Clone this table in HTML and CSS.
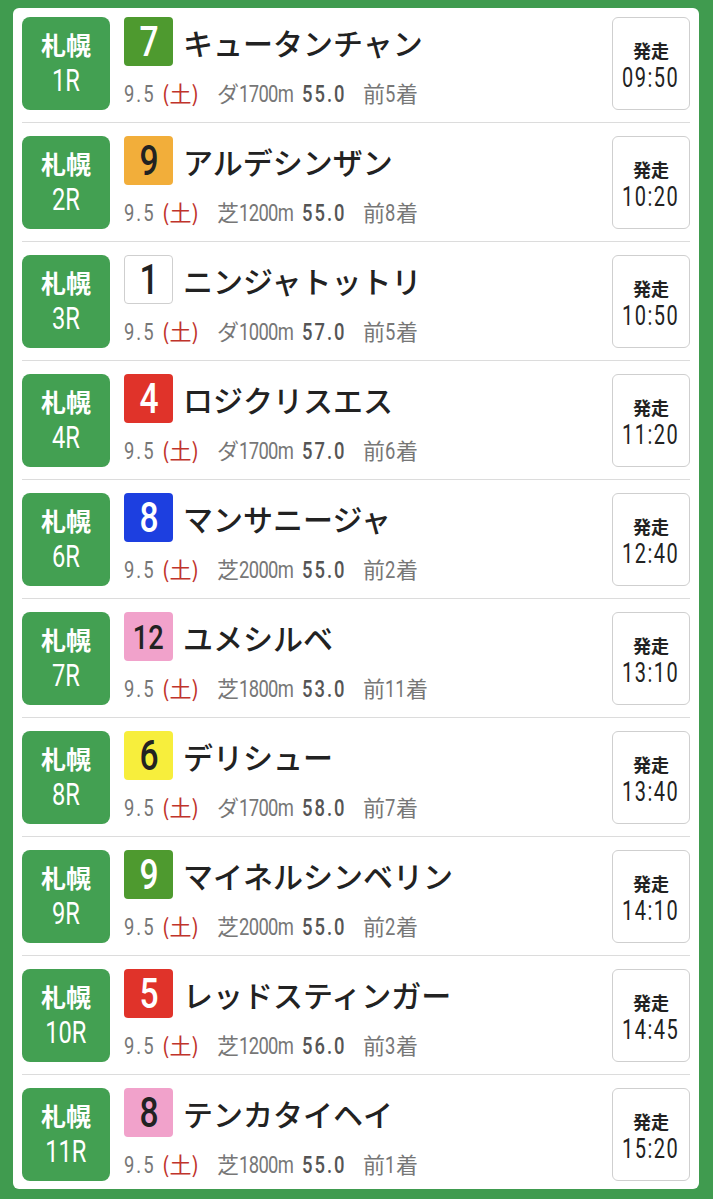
FILE: index.html
```html
<!DOCTYPE html>
<html lang="ja">
<head>
<meta charset="utf-8">
<title>札幌</title>
<link rel="stylesheet" href="styles.css">
</head>
<body>
<div class="card">
  <div class="row">
    <div class="venue"><span class="v-name">札幌</span><span class="v-race">1R</span></div>
    <div class="info">
      <div class="top"><span class="num c-green"><span class="sq">7</span></span><span class="horse">キュータンチャン</span></div>
      <div class="meta"><span class="nb w-date"><span class="sq">9.5</span></span><span class="dow">(土)</span><span class="surf">ダ</span><span class="nb w-dist"><span class="sq">1700m</span></span><span class="nb w-kg kg"><span class="sq">55.0</span></span><span class="prev">前</span><span class="nb w-d1"><span class="sq">5</span></span><span class="prev">着</span></div>
    </div>
    <div class="start"><span class="s-label">発走</span><span class="s-time">09:50</span></div>
  </div>
  <div class="row">
    <div class="venue"><span class="v-name">札幌</span><span class="v-race">2R</span></div>
    <div class="info">
      <div class="top"><span class="num c-orange"><span class="sq">9</span></span><span class="horse">アルデシンザン</span></div>
      <div class="meta"><span class="nb w-date"><span class="sq">9.5</span></span><span class="dow">(土)</span><span class="surf">芝</span><span class="nb w-dist"><span class="sq">1200m</span></span><span class="nb w-kg kg"><span class="sq">55.0</span></span><span class="prev">前</span><span class="nb w-d1"><span class="sq">8</span></span><span class="prev">着</span></div>
    </div>
    <div class="start"><span class="s-label">発走</span><span class="s-time">10:20</span></div>
  </div>
  <div class="row">
    <div class="venue"><span class="v-name">札幌</span><span class="v-race">3R</span></div>
    <div class="info">
      <div class="top"><span class="num c-white"><span class="sq">1</span></span><span class="horse">ニンジャトットリ</span></div>
      <div class="meta"><span class="nb w-date"><span class="sq">9.5</span></span><span class="dow">(土)</span><span class="surf">ダ</span><span class="nb w-dist"><span class="sq">1000m</span></span><span class="nb w-kg kg"><span class="sq">57.0</span></span><span class="prev">前</span><span class="nb w-d1"><span class="sq">5</span></span><span class="prev">着</span></div>
    </div>
    <div class="start"><span class="s-label">発走</span><span class="s-time">10:50</span></div>
  </div>
  <div class="row">
    <div class="venue"><span class="v-name">札幌</span><span class="v-race">4R</span></div>
    <div class="info">
      <div class="top"><span class="num c-red"><span class="sq">4</span></span><span class="horse">ロジクリスエス</span></div>
      <div class="meta"><span class="nb w-date"><span class="sq">9.5</span></span><span class="dow">(土)</span><span class="surf">ダ</span><span class="nb w-dist"><span class="sq">1700m</span></span><span class="nb w-kg kg"><span class="sq">57.0</span></span><span class="prev">前</span><span class="nb w-d1"><span class="sq">6</span></span><span class="prev">着</span></div>
    </div>
    <div class="start"><span class="s-label">発走</span><span class="s-time">11:20</span></div>
  </div>
  <div class="row">
    <div class="venue"><span class="v-name">札幌</span><span class="v-race">6R</span></div>
    <div class="info">
      <div class="top"><span class="num c-blue"><span class="sq">8</span></span><span class="horse">マンサニージャ</span></div>
      <div class="meta"><span class="nb w-date"><span class="sq">9.5</span></span><span class="dow">(土)</span><span class="surf">芝</span><span class="nb w-dist"><span class="sq">2000m</span></span><span class="nb w-kg kg"><span class="sq">55.0</span></span><span class="prev">前</span><span class="nb w-d1"><span class="sq">2</span></span><span class="prev">着</span></div>
    </div>
    <div class="start"><span class="s-label">発走</span><span class="s-time">12:40</span></div>
  </div>
  <div class="row">
    <div class="venue"><span class="v-name">札幌</span><span class="v-race">7R</span></div>
    <div class="info">
      <div class="top"><span class="num c-pink two"><span class="sq">12</span></span><span class="horse">ユメシルベ</span></div>
      <div class="meta"><span class="nb w-date"><span class="sq">9.5</span></span><span class="dow">(土)</span><span class="surf">芝</span><span class="nb w-dist"><span class="sq">1800m</span></span><span class="nb w-kg kg"><span class="sq">53.0</span></span><span class="prev">前</span><span class="nb w-d2"><span class="sq">11</span></span><span class="prev">着</span></div>
    </div>
    <div class="start"><span class="s-label">発走</span><span class="s-time">13:10</span></div>
  </div>
  <div class="row">
    <div class="venue"><span class="v-name">札幌</span><span class="v-race">8R</span></div>
    <div class="info">
      <div class="top"><span class="num c-yellow"><span class="sq">6</span></span><span class="horse">デリシュー</span></div>
      <div class="meta"><span class="nb w-date"><span class="sq">9.5</span></span><span class="dow">(土)</span><span class="surf">ダ</span><span class="nb w-dist"><span class="sq">1700m</span></span><span class="nb w-kg kg"><span class="sq">58.0</span></span><span class="prev">前</span><span class="nb w-d1"><span class="sq">7</span></span><span class="prev">着</span></div>
    </div>
    <div class="start"><span class="s-label">発走</span><span class="s-time">13:40</span></div>
  </div>
  <div class="row">
    <div class="venue"><span class="v-name">札幌</span><span class="v-race">9R</span></div>
    <div class="info">
      <div class="top"><span class="num c-green"><span class="sq">9</span></span><span class="horse">マイネルシンベリン</span></div>
      <div class="meta"><span class="nb w-date"><span class="sq">9.5</span></span><span class="dow">(土)</span><span class="surf">芝</span><span class="nb w-dist"><span class="sq">2000m</span></span><span class="nb w-kg kg"><span class="sq">55.0</span></span><span class="prev">前</span><span class="nb w-d1"><span class="sq">2</span></span><span class="prev">着</span></div>
    </div>
    <div class="start"><span class="s-label">発走</span><span class="s-time">14:10</span></div>
  </div>
  <div class="row">
    <div class="venue"><span class="v-name">札幌</span><span class="v-race">10R</span></div>
    <div class="info">
      <div class="top"><span class="num c-red"><span class="sq">5</span></span><span class="horse">レッドスティンガー</span></div>
      <div class="meta"><span class="nb w-date"><span class="sq">9.5</span></span><span class="dow">(土)</span><span class="surf">芝</span><span class="nb w-dist"><span class="sq">1200m</span></span><span class="nb w-kg kg"><span class="sq">56.0</span></span><span class="prev">前</span><span class="nb w-d1"><span class="sq">3</span></span><span class="prev">着</span></div>
    </div>
    <div class="start"><span class="s-label">発走</span><span class="s-time">14:45</span></div>
  </div>
  <div class="row">
    <div class="venue"><span class="v-name">札幌</span><span class="v-race">11R</span></div>
    <div class="info">
      <div class="top"><span class="num c-pink"><span class="sq">8</span></span><span class="horse">テンカタイヘイ</span></div>
      <div class="meta"><span class="nb w-date"><span class="sq">9.5</span></span><span class="dow">(土)</span><span class="surf">芝</span><span class="nb w-dist"><span class="sq">1800m</span></span><span class="nb w-kg kg"><span class="sq">55.0</span></span><span class="prev">前</span><span class="nb w-d1"><span class="sq">1</span></span><span class="prev">着</span></div>
    </div>
    <div class="start"><span class="s-label">発走</span><span class="s-time">15:20</span></div>
  </div>
</div>
</body>
</html>
```

FILE: styles.css
```css
* { box-sizing: border-box; }

html, body {
  margin: 0;
  background: #409b4f;
}

body {
  padding: 8px 14px 10px 13px;
  font-family: "Noto Sans CJK JP", sans-serif;
}

.card {
  background: #fff;
  border-radius: 6px;
  padding: 9px 9px 8px 9px;
}

.row {
  display: grid;
  grid-template-columns: 88px 1fr 78px;
  column-gap: 14px;
  padding: 13px 0 12px;
  border-top: 1px solid #dcdcdc;
  height: 119px;
}

.row:first-child {
  padding-top: 0;
  border-top: none;
  height: 105px;
}

.row:last-child {
  padding-bottom: 0;
  height: 107px;
}

/* narrow digits */
.sq {
  display: inline-block;
  white-space: nowrap;
  transform: scaleX(0.8);
}

.venue {
  background: #43a052;
  border-radius: 8px;
  color: #fff;
  display: flex;
  flex-direction: column;
  align-items: center;
  justify-content: center;
}

.v-name {
  font-family: "Liberation Sans", "Noto Sans CJK JP", sans-serif;
  font-weight: 700;
  font-size: 25px;
  line-height: 32px;
}

.v-race {
  display: inline-block;
  font-family: Roboto, "Liberation Sans", sans-serif;
  font-weight: 400;
  font-size: 32px;
  line-height: 36px;
  transform: scaleX(0.74);
}

.info {
  display: flex;
  flex-direction: column;
  min-width: 0;
}

.top {
  display: flex;
  align-items: center;
  height: 49px;
}

.num {
  width: 49px;
  height: 49px;
  border-radius: 4px;
  display: flex;
  align-items: center;
  justify-content: center;
  font-family: Roboto, "Liberation Sans", sans-serif;
  font-weight: 500;
  font-size: 42px;
  line-height: 1;
  color: #222;
  flex: none;
}

.num.two { font-size: 34px; }

.c-green { background: #4e9a2f; color: #fff; }
.c-orange { background: #f2ae3a; }
.c-white { background: #fff; border: 1px solid #cfcfcf; }
.c-red { background: #e0332a; color: #fff; }
.c-blue { background: #1d3fe0; color: #fff; }
.c-pink { background: #f1a2cb; }
.c-yellow { background: #f7ee3c; }

.horse {
  margin-left: 10px;
  font-size: 30px;
  font-weight: 500;
  color: #222;
  white-space: nowrap;
}

.meta {
  display: flex;
  align-items: baseline;
  margin-top: 12px;
  font-size: 22px;
  line-height: 28px;
  color: #777;
  white-space: nowrap;
}

.nb {
  display: inline-block;
  flex: none;
  font-family: Roboto, "Liberation Sans", sans-serif;
  font-size: 23px;
}

.nb .sq { transform-origin: 0 50%; }

.w-date { width: 31px; margin-right: 7px; }
.w-date .sq { letter-spacing: 2.5px; }
.w-dist { width: 54px; margin-right: 9px; }
.w-dist .sq { letter-spacing: -0.8px; }
.w-kg { width: 48px; margin-right: 13px; }
.w-kg .sq { letter-spacing: 2.5px; }
.w-d1 { width: 11px; }
.w-d2 { width: 21px; }

.dow { color: #c0332b; margin-right: 18px; }
.kg { color: #555; font-weight: 500; }

.start {
  border: 1px solid #cfcfcf;
  border-radius: 6px;
  display: flex;
  flex-direction: column;
  align-items: center;
  justify-content: center;
  padding-top: 3px;
  color: #222;
}

.s-label {
  font-weight: 700;
  font-size: 18px;
  line-height: 26px;
}

.s-time {
  display: inline-block;
  font-family: Roboto, "Liberation Sans", sans-serif;
  font-size: 27px;
  line-height: 31px;
  letter-spacing: 2px;
  transform: scaleX(0.74);
}
```
